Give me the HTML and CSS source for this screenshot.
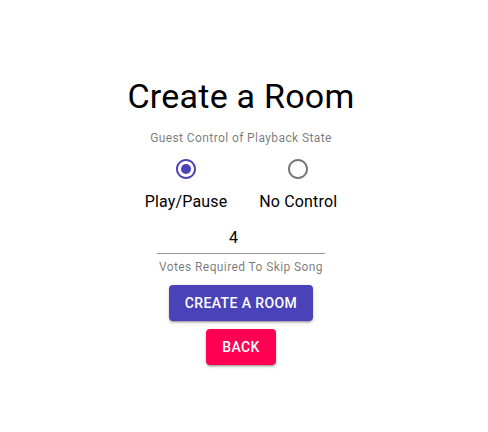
FILE: index.html
```html
<!DOCTYPE html>
<html lang="en">
<head>
<meta charset="utf-8">
<title>Create a Room</title>
<link rel="stylesheet" href="styles.css">
</head>
<body>
<div class="page">
  <div class="grid">
    <div class="item">
      <h4 class="title">Create a Room</h4>
    </div>
    <div class="item">
      <fieldset class="control">
        <p class="helper">Guest Control of Playback State</p>
        <div class="radio-group">
          <label class="option">
            <span class="radio checked">
              <svg viewBox="0 0 24 24" width="24" height="24"><path d="M12 2C6.48 2 2 6.48 2 12s4.48 10 10 10 10-4.48 10-10S17.52 2 12 2zm0 18c-4.42 0-8-3.58-8-8s3.58-8 8-8 8 3.58 8 8-3.58 8-8 8z"/><circle cx="12" cy="12" r="5"/></svg>
            </span>
            <span class="option-label">Play/Pause</span>
          </label>
          <label class="option">
            <span class="radio">
              <svg viewBox="0 0 24 24" width="24" height="24"><path d="M12 2C6.48 2 2 6.48 2 12s4.48 10 10 10 10-4.48 10-10S17.52 2 12 2zm0 18c-4.42 0-8-3.58-8-8s3.58-8 8-8 8 3.58 8 8-3.58 8-8 8z"/></svg>
            </span>
            <span class="option-label">No Control</span>
          </label>
        </div>
      </fieldset>
    </div>
    <div class="item">
      <div class="field">
        <div class="input-wrap">
          <input class="input" type="text" value="4">
        </div>
        <p class="helper">Votes Required To Skip Song</p>
      </div>
    </div>
    <div class="item">
      <button class="btn btn-primary">Create a Room</button>
    </div>
    <div class="item">
      <button class="btn btn-secondary">Back</button>
    </div>
  </div>
</div>
</body>
</html>
```

FILE: styles.css
```css
html, body {
  margin: 0;
  padding: 0;
  background: #ffffff;
}

body {
  font-family: Roboto, "Helvetica", Arial, sans-serif;
  color: rgba(0, 0, 0, 0.87);
}

.page {
  width: 482px;
  padding-top: 71px;
}

.grid {
  display: flex;
  flex-direction: column;
  align-items: stretch;
}

.item {
  padding: 4px;
  display: flex;
  justify-content: center;
}

.title {
  margin: 0;
  font-size: 34px;
  font-weight: 400;
  line-height: 42px;
  letter-spacing: 0.25px;
  color: #000;
}

.control {
  margin: 0;
  padding: 0;
  border: 0;
  min-width: 0;
  display: flex;
  flex-direction: column;
  align-items: center;
}

.helper {
  margin: 3px 0 0;
  font-size: 12px;
  line-height: 20px;
  letter-spacing: 0.4px;
  color: rgba(0, 0, 0, 0.54);
  text-align: center;
}

.radio-group {
  display: flex;
  flex-direction: row;
}

.option {
  display: flex;
  flex-direction: column;
  align-items: center;
  margin: 0 16px;
  cursor: pointer;
}

.radio {
  width: 42px;
  height: 42px;
  display: flex;
  align-items: center;
  justify-content: center;
  color: rgba(0, 0, 0, 0.54);
}

.radio svg {
  fill: currentColor;
  display: block;
}

.radio.checked {
  color: #4a42b8;
}

.option-label {
  font-size: 16px;
  line-height: 24px;
  letter-spacing: 0.15px;
  color: #000;
}

.field {
  display: flex;
  flex-direction: column;
  align-items: center;
  width: 168px;
}

.input-wrap {
  width: 100%;
  border-bottom: 1px solid rgba(0, 0, 0, 0.42);
  display: flex;
}

.input {
  width: 100%;
  border: 0;
  outline: 0;
  background: transparent;
  padding: 6px 15px 6px 0;
  height: 19px;
  margin: 0;
  font-family: inherit;
  font-size: 16px;
  color: #000;
  text-align: center;
}

.btn {
  border: 0;
  border-radius: 4px;
  padding: 6px 16px;
  font-family: inherit;
  font-size: 14px;
  font-weight: 500;
  line-height: 24px;
  letter-spacing: 0.4px;
  text-transform: uppercase;
  color: #fff;
  cursor: pointer;
  box-shadow: 0 3px 1px -2px rgba(0, 0, 0, 0.2), 0 2px 2px 0 rgba(0, 0, 0, 0.14), 0 1px 5px 0 rgba(0, 0, 0, 0.12);
}

.btn-primary {
  background: #4a42b8;
}

.btn-secondary {
  background: #ff0052;
}
```
